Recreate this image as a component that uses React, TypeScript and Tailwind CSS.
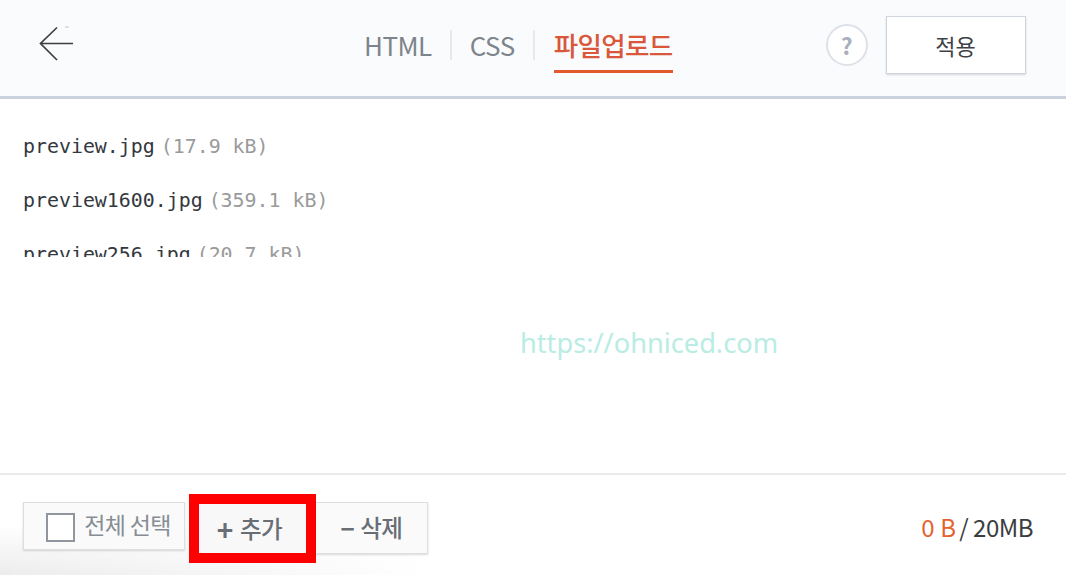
import React from "react";

const sans = "font-['Noto_Sans_CJK_KR','Noto_Sans',sans-serif]";

function File({ name, size, clip }: { name: string; size: string; clip?: boolean }) {
  return (
    <div className={`flex gap-[6px] font-['DejaVu_Sans_Mono',monospace] text-[19.9px] leading-[28px] ${clip ? "h-[16px] items-start overflow-hidden" : "h-[28px] items-center"}`}>
      <span className="text-[#33383e]">{name}</span>
      <span className="text-[#9a9a9a]">{size}</span>
    </div>
  );
}

export default function App() {
  return (
    <div className={`relative flex h-[579px] w-[1066px] flex-col overflow-hidden bg-white ${sans}`}>
      <header className="flex h-[99px] shrink-0 items-center border-b-[3px] border-[#c9d1dc] bg-[#fafbfd] pb-[7px]">
        <svg width="36" height="36" viewBox="0 0 36 36" className="ml-[39px] mt-[-1px] shrink-0" fill="none" stroke="#3c3f42" strokeWidth="1.7">
          <path d="M18 1.5 1.5 17.5 18 34M1.5 17.5H34" />
          <path d="M26 1h4" stroke="#c8c8c8" strokeWidth="1" />
        </svg>
        <nav className="ml-[289px] flex items-center text-[26px] leading-[36px] text-[#7d848b]">
          <span className="tracking-[-0.5px]">HTML</span>
          <span className="mx-[18px] h-[30px] w-[2px] bg-[#e6e8eb]" />
          <span className="tracking-[-0.5px]">CSS</span>
          <span className="ml-[18px] mr-[19px] h-[30px] w-[2px] bg-[#e6e8eb]" />
          <span className="mt-[11px] border-b-[3px] border-[#e2592f] pb-[8px] text-[26.6px] font-medium leading-[34px] tracking-[-0.7px] text-[#d9573a]">파일업로드</span>
        </nav>
        <div className="ml-[153px] mt-[1px] flex h-[42px] w-[42px] shrink-0 items-center justify-center rounded-full border-2 border-[#dde1e8] bg-white text-[23px] font-bold text-[#a9b0bd]">?</div>
        <div className="ml-[18px] mt-[1px] flex h-[58px] w-[140px] shrink-0 items-center justify-center border border-[#cfd5de] bg-white text-[22px] text-[#3f4347] shadow-[0_1px_2px_rgba(0,0,0,0.15)]">적용</div>
      </header>

      <main className="flex flex-1 flex-col gap-[26px] px-[23px] pt-[34px]">
        <File name="preview.jpg" size="(17.9 kB)" />
        <File name="preview1600.jpg" size="(359.1 kB)" />
        <File name="preview256.jpg" size="(20.7 kB)" clip />
      </main>

      <footer className="mb-[4px] flex h-[102px] shrink-0 items-start border-t-2 border-[#eaeaea] bg-[linear-gradient(to_right,rgba(255,255,255,0)_0%,rgba(255,255,255,1)_40%),linear-gradient(to_top,#ececec_0%,#ffffff_50%)] pl-[23px] pr-[33px]">
        <button className="mt-[27px] flex h-[48px] w-[162px] items-center justify-center gap-[9px] border border-[#dedede] bg-[#fafafa] pl-[9px] text-[23px] tracking-[-0.7px] text-[#868d95] shadow-[0_1px_2px_rgba(0,0,0,0.15)]">
          <span className="mb-[-2px] h-[29px] w-[29px] shrink-0 border-2 border-[#8f969d] bg-white" />
          <span className="mt-[-4px] whitespace-nowrap">전체 선택</span>
        </button>
        <button className="ml-[4px] mt-[19px] box-border flex h-[69px] w-[127px] items-center justify-center gap-[7px] border-[10px] border-[#fe0000] bg-[#f8f8f8] pr-[6px] text-[23.5px] font-medium tracking-[-0.5px] text-[#686e75]">
          <span className="text-[28px] font-bold leading-none">+</span>
          <span>추가</span>
        </button>
        <button className="mt-[27px] flex h-[52px] w-[112px] items-center justify-center gap-[6px] border border-l-0 border-[#dedede] bg-[#fafafa] text-[23.5px] font-medium tracking-[-0.5px] text-[#686e75] shadow-[0_1px_2px_rgba(0,0,0,0.15)]">
          <span className="text-[24px] font-bold leading-none">−</span>
          <span>삭제</span>
        </button>
        <div className="ml-auto mt-[34px] flex items-center text-[24px] leading-[36px] tracking-[-0.5px]">
          <span className="tracking-[0.2px] text-[#e2632f]">0 B</span>
          <span className="ml-[3px] text-[#3a3d40]">/ 20MB</span>
        </div>
      </footer>

      <div className="pointer-events-none absolute left-[520px] top-[323px] font-['Noto_Sans',sans-serif] text-[27.2px] leading-[40px] text-[#b9ece3]">
        https://ohniced.com
      </div>
    </div>
  );
}
